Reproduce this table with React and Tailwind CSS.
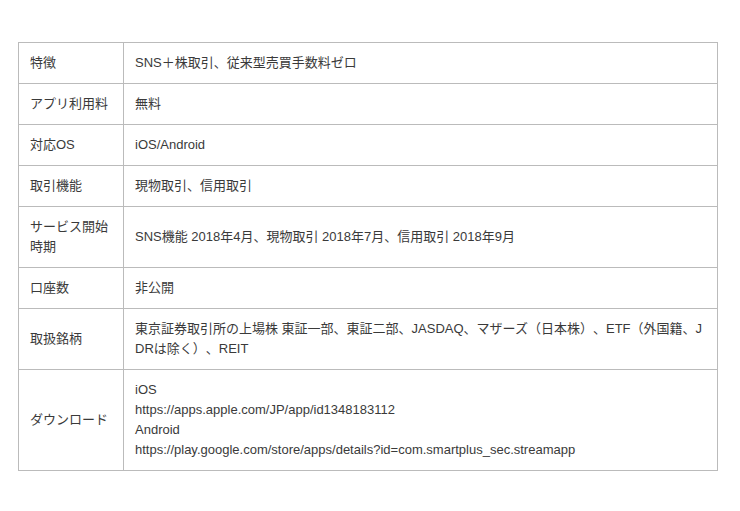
import React from "react";

const rows = [
  { label: "特徴", value: ["SNS＋株取引、従来型売買手数料ゼロ"] },
  { label: "アプリ利用料", value: ["無料"] },
  { label: "対応OS", value: ["iOS/Android"] },
  { label: "取引機能", value: ["現物取引、信用取引"] },
  { label: "サービス開始時期", value: ["SNS機能 2018年4月、現物取引 2018年7月、信用取引 2018年9月"] },
  { label: "口座数", value: ["非公開"] },
  {
    label: "取扱銘柄",
    value: ["東京証券取引所の上場株 東証一部、東証二部、JASDAQ、マザーズ（日本株）、ETF（外国籍、JDRは除く）、REIT"],
  },
  {
    label: "ダウンロード",
    value: [
      "iOS",
      "https://apps.apple.com/JP/app/id1348183112",
      "Android",
      "https://play.google.com/store/apps/details?id=com.smartplus_sec.streamapp",
    ],
  },
];

const App = () => {
  return (
    <div
      className="w-[740px] h-[511px] bg-white pt-[42px] pl-[18px]"
      style={{ fontFamily: '"Liberation Sans", "Noto Sans CJK JP", sans-serif' }}
    >
      <table className="w-[700px] border-collapse text-[13px] leading-[20px] text-[#3a3a3a] [text-spacing-trim:space-all]">
        <tbody>
          {rows.map((row) => (
            <tr key={row.label}>
              {/* Label */}
              <td className="w-[105px] border border-[#bbb] px-[11px] py-[10px] align-middle">
                {row.label}
              </td>
              {/* Value */}
              <td className="border border-[#bbb] px-[11px] py-[10px] align-middle break-all">
                {row.value.map((line) => (
                  <div key={line}>{line}</div>
                ))}
              </td>
            </tr>
          ))}
        </tbody>
      </table>
    </div>
  );
};

export default App;
